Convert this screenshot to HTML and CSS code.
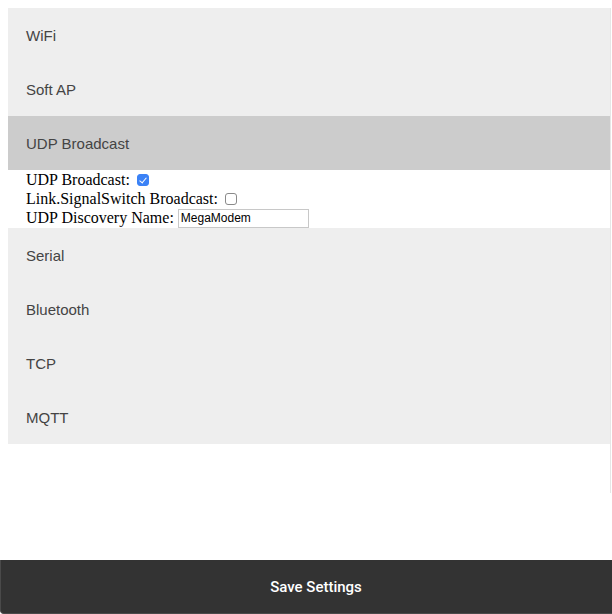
FILE: index.html
```html
<!DOCTYPE html>
<html>
<head>
<meta charset="utf-8">
<link rel="stylesheet" href="styles.css">
</head>
<body>
<div class="wrap">
  <button class="accordion">WiFi</button>
  <button class="accordion">Soft AP</button>
  <button class="accordion active">UDP Broadcast</button>
  <div class="panel">
    <div class="row">UDP Broadcast: <input type="checkbox" class="cb" checked></div>
    <div class="row">Link.SignalSwitch Broadcast: <input type="checkbox" class="cb"></div>
    <div class="row">UDP Discovery Name: <input type="text" class="txt" value="MegaModem"></div>
  </div>
  <button class="accordion">Serial</button>
  <button class="accordion">Bluetooth</button>
  <button class="accordion">TCP</button>
  <button class="accordion">MQTT</button>
</div>
<button class="save">Save Settings</button>
</body>
</html>
```

FILE: styles.css
```css
html, body {
  margin: 0;
  padding: 0;
  background: #fff;
}
body {
  padding: 8px 0 0 8px;
  font-family: "Liberation Serif", "Times New Roman", serif;
  font-size: 16px;
  overflow: hidden;
}
.wrap {
  width: 602px;
  height: 485px;
  border-right: 1px solid #e6e6e6;
}
.accordion {
  display: block;
  width: 602px;
  height: 54px;
  margin: 0;
  padding: 0 18px;
  border: none;
  background: #eee;
  color: #444;
  font-family: "Liberation Sans", Arial, sans-serif;
  font-size: 15px;
  text-align: left;
  outline: none;
  cursor: pointer;
}
.accordion.active {
  background: #ccc;
}
.panel {
  background: #fff;
  padding: 0 18px;
  color: #000;
}
.row {
  display: flex;
  align-items: center;
  white-space: pre;
  line-height: 18px;
}
.row:nth-child(1), .row:nth-child(2) {
  height: 19px;
}
.row:nth-child(3) {
  height: 20px;
}
.cb {
  appearance: none;
  -webkit-appearance: none;
  width: 12px;
  height: 12px;
  margin: 1px 0 0 3px;
  border: 1px solid #8a8a8a;
  border-radius: 3px;
  background: #fff;
  position: relative;
  box-sizing: border-box;
}
.cb:checked {
  background: #3b82f6;
  border-color: #3b82f6;
}
.cb:checked::after {
  content: "";
  position: absolute;
  left: 3px;
  top: 1px;
  width: 3px;
  height: 6px;
  border: solid #fff;
  border-width: 0 1.5px 1.5px 0;
  transform: rotate(40deg);
}
.txt {
  width: 131px;
  height: 19px;
  box-sizing: border-box;
  margin: 0;
  padding: 0 2px;
  border: 1px solid #c8c8c8;
  font-family: "Liberation Sans", Arial, sans-serif;
  font-size: 12px;
  color: #000;
}
.save {
  position: fixed;
  left: 0;
  bottom: 0;
  width: 632px;
  height: 54px;
  margin: 0;
  border: 1px solid #4a4a4a;
  border-top: none;
  border-radius: 0 0 4px 4px;
  background: #333;
  color: #fff;
  font-family: Roboto, "Liberation Sans", Arial, sans-serif;
  font-weight: 500;
  font-size: 15px;
}
```
